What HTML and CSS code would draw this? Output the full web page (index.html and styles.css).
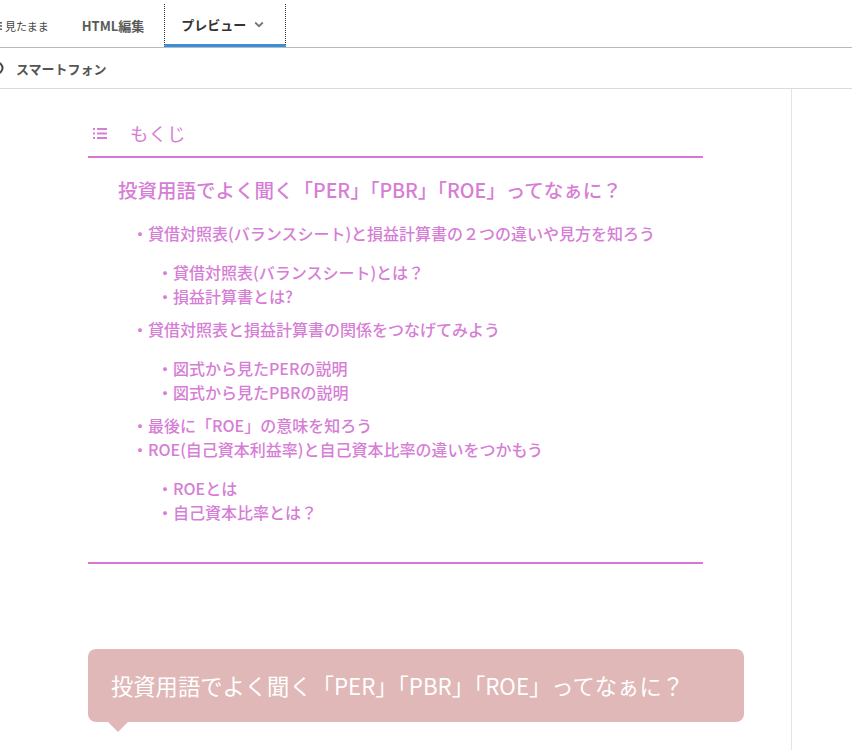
FILE: index.html
```html
<!DOCTYPE html>
<html lang="ja">
<head>
    <meta charset="UTF-8">
    <title>プレビュー</title>
    <link rel="stylesheet" href="styles.css">
</head>
<body>
    <div class="tabbar">
        <div class="tab tab-wysiwyg">
            <svg class="cut-icon" width="12" height="12" viewBox="0 0 12 12">
                <rect x="1" y="2" width="10" height="1.6" fill="#666"/>
                <rect x="1" y="5.2" width="10" height="1.6" fill="#666"/>
                <rect x="1" y="8.4" width="10" height="1.6" fill="#666"/>
            </svg>
            <span>見たまま</span>
        </div>
        <div class="tab tab-html">HTML編集</div>
        <div class="tab tab-preview">
            <span>プレビュー</span>
            <svg class="chevron" width="10" height="7" viewBox="0 0 10 7">
                <path d="M1.2 1.5 L5 5.2 L8.8 1.5" fill="none" stroke="#777" stroke-width="1.8"/>
            </svg>
        </div>
    </div>
    <div class="devicebar">
        <svg class="cut-circle" width="14" height="14" viewBox="0 0 14 14">
            <circle cx="7" cy="7" r="5.5" fill="none" stroke="#444" stroke-width="2"/>
        </svg>
        <span>スマートフォン</span>
    </div>
    <div class="page">
        <div class="main">
            <div class="toc">
                <div class="toc-title">
                    <svg class="toc-icon" width="14" height="11" viewBox="0 0 14 11">
                        <rect x="0" y="0" width="2" height="2" fill="#d67ed6"/>
                        <rect x="4" y="0" width="10" height="2" fill="#d67ed6"/>
                        <rect x="0" y="4.5" width="2" height="2" fill="#d67ed6"/>
                        <rect x="4" y="4.5" width="10" height="2" fill="#d67ed6"/>
                        <rect x="0" y="9" width="2" height="2" fill="#d67ed6"/>
                        <rect x="4" y="9" width="10" height="2" fill="#d67ed6"/>
                    </svg>
                    <span>もくじ</span>
                </div>
                <div class="toc-body">
                    <div class="toc-h2">投資用語でよく聞く「PER」「PBR」「ROE」ってなぁに？</div>
                    <ul class="toc-list">
                        <li>・貸借対照表(バランスシート)と損益計算書の２つの違いや見方を知ろう
                            <ul class="toc-sub">
                                <li>・貸借対照表(バランスシート)とは？</li>
                                <li>・損益計算書とは?</li>
                            </ul>
                        </li>
                        <li>・貸借対照表と損益計算書の関係をつなげてみよう
                            <ul class="toc-sub">
                                <li>・図式から見たPERの説明</li>
                                <li>・図式から見たPBRの説明</li>
                            </ul>
                        </li>
                        <li>・最後に「ROE」の意味を知ろう</li>
                        <li>・ROE(自己資本利益率)と自己資本比率の違いをつかもう
                            <ul class="toc-sub">
                                <li>・ROEとは</li>
                                <li>・自己資本比率とは？</li>
                            </ul>
                        </li>
                    </ul>
                </div>
            </div>
            <h2 class="balloon">投資用語でよく聞く「PER」「PBR」「ROE」ってなぁに？</h2>
        </div>
        <div class="side"></div>
    </div>
</body>
</html>
```
FILE: styles.css
```css
body {
    margin: 0;
    font-family: "Noto Sans CJK JP", "Noto Sans", sans-serif;
    background-color: #fff;
    color: #333;
    overflow: hidden;
}

.tabbar {
    display: flex;
    align-items: stretch;
    height: 47px;
    border-bottom: 1px solid #b7bbbf;
}

.tab {
    display: flex;
    align-items: center;
    box-sizing: border-box;
}

.tab-wysiwyg {
    font-size: 11px;
    color: #444;
    padding-top: 4px;
}

.cut-icon {
    margin-left: -9px;
    margin-right: 2px;
}

.tab-html {
    margin-left: 33px;
    font-size: 13px;
    font-weight: bold;
    color: #5a5a5a;
    padding-top: 4px;
}

.tab-preview {
    margin-left: 20px;
    margin-top: 4px;
    width: 122px;
    padding-left: 16px;
    font-size: 13px;
    font-weight: bold;
    color: #333;
    border-left: 1px dotted #333;
    border-right: 1px dotted #333;
    border-bottom: 3px solid #3b8fd9;
}

.chevron {
    margin-left: 8px;
}

.devicebar {
    display: flex;
    align-items: center;
    height: 40px;
    border-bottom: 1px solid #d9dcdf;
    font-size: 13px;
    font-weight: bold;
    color: #555;
}

.cut-circle {
    margin-left: -10px;
    margin-right: 12px;
}

.page {
    display: flex;
    height: 700px;
}

.main {
    width: 792px;
    border-right: 1px solid #e4e4e4;
    padding: 0 0 0 88px;
    box-sizing: border-box;
}

.toc {
    width: 615px;
    margin-top: 31px;
    color: #d67ed6;
}

.toc-title {
    display: flex;
    align-items: center;
    height: 26px;
    padding-bottom: 10px;
    border-bottom: 2px solid #d874d6;
    font-size: 18.5px;
}

.toc-icon {
    margin-left: 5px;
    margin-right: 23px;
}

.toc-body {
    padding: 19px 0 29px 30px;
    border-bottom: 2px solid #d874d6;
}

.toc-h2 {
    font-size: 19.5px;
    font-weight: 500;
    line-height: 26px;
}

.toc-list {
    list-style: none;
    margin: 18px 0 0 14px;
    padding: 0;
    font-size: 16px;
    font-weight: 500;
    line-height: 24px;
}

.toc-sub {
    list-style: none;
    margin: 15px 0 9px 25px;
    padding: 0;
}

.balloon {
    position: relative;
    width: 656px;
    box-sizing: border-box;
    margin: 85px 0 0 0;
    padding: 22px 23px;
    height: 73px;
    background-color: #e0b8b8;
    border-radius: 8px;
    color: #fff;
    font-size: 22.3px;
    font-weight: normal;
    line-height: 29px;
}

.balloon::after {
    content: "";
    position: absolute;
    left: 20px;
    bottom: -10px;
    border-left: 10px solid transparent;
    border-right: 10px solid transparent;
    border-top: 10px solid #e0b8b8;
}

.side {
    flex: 1;
}
```
